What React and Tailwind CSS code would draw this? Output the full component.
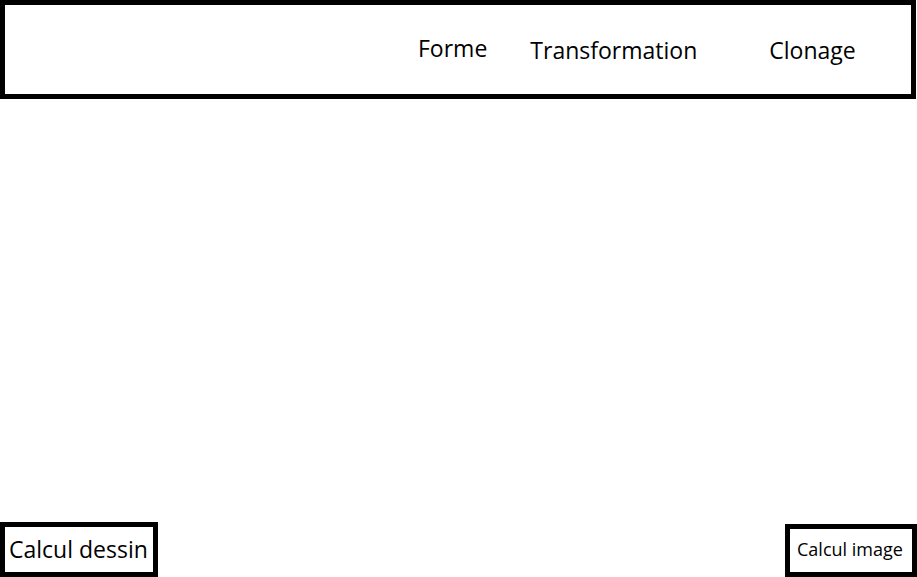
export default function App() {
  return (
    <div
      className="w-[917px] h-[577px] bg-white text-black flex flex-col"
      style={{ fontFamily: '"Open Sans", "Noto Sans", sans-serif' }}
    >
      <header className="w-[916px] h-[99px] border-[5px] border-black flex items-start">
        <span className="ml-[413px] mt-[29px] text-[23px] leading-[28px]">Forme</span>
        <span className="ml-[43px] mt-[31px] text-[23px] leading-[28px]">Transformation</span>
        <span className="ml-[72px] mt-[31px] text-[23px] leading-[28px]">Clonage</span>
      </header>

      <main className="flex-1" />

      <footer className="flex items-end justify-between">
        <button className="w-[158px] h-[55px] border-[5px] border-black flex items-start pt-[8px] pl-[4px] text-[23px] leading-[28px]">
          Calcul dessin
        </button>
        <button className="w-[132px] h-[53px] border-[5px] border-black flex items-start pt-[8px] pl-[7px] text-[18px] leading-[24px]">
          Calcul image
        </button>
      </footer>
    </div>
  );
}
